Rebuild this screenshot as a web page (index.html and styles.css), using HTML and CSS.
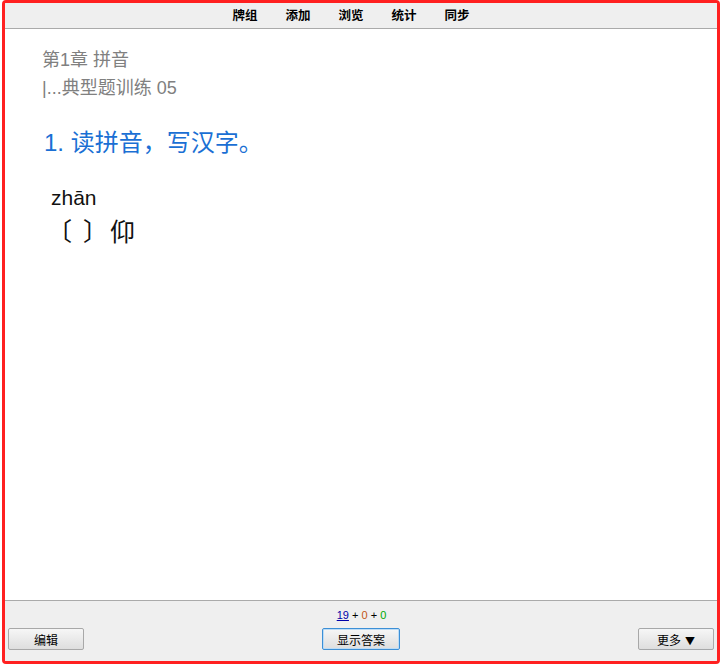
FILE: index.html
```html
<!DOCTYPE html>
<html lang="zh">
<head>
<meta charset="UTF-8" />
<title>Anki</title>
<link rel="stylesheet" href="styles.css">
</head>
<body>
<div class="frame">
  <div class="toolbar">
    <a class="tab">牌组</a>
    <a class="tab">添加</a>
    <a class="tab">浏览</a>
    <a class="tab">统计</a>
    <a class="tab">同步</a>
  </div>

  <div class="card">
    <div class="deck">第1章 拼音</div>
    <div class="deck">|...典型题训练 05</div>
    <div class="question">1. 读拼音，写汉字。</div>
    <div class="pinyin">zhān</div>
    <div class="blank">〔&nbsp;〕仰</div>
  </div>

  <div class="bottom">
    <div class="counts">
      <span class="new-count">19</span> + <span class="learn-count">0</span> + <span class="review-count">0</span>
    </div>
    <div class="buttons">
      <button class="btn">编辑</button>
      <button class="btn primary">显示答案</button>
      <button class="btn">更多<span class="arrow">▼</span></button>
    </div>
  </div>
</div>
</body>
</html>
```

FILE: styles.css
```css
* {
  box-sizing: border-box;
  margin: 0;
  padding: 0;
}

body {
  background: #fff;
  font-family: "Noto Sans CJK SC", sans-serif;
}

.frame {
  margin-left: 2px;
  width: 718px;
  height: 664px;
  border: 3px solid #ff2020;
  border-radius: 4px;
  display: flex;
  flex-direction: column;
  overflow: hidden;
}

/* top toolbar */
.toolbar {
  height: 26px;
  background: #efefef;
  border-bottom: 1px solid #aaa;
  display: flex;
  justify-content: center;
  align-items: center;
  gap: 28px;
  padding-right: 20px;
}

.tab {
  font-size: 12.5px;
  font-weight: bold;
  color: #000;
  line-height: 1;
}

/* card area */
.card {
  flex: 1;
  background: #fff;
  padding: 17px 0 0 37px;
  font-family: "Liberation Sans", "Noto Sans CJK SC", sans-serif;
}

.deck {
  font-size: 18px;
  line-height: 28px;
  color: #808080;
}

.question {
  margin-top: 24px;
  font-size: 24px;
  line-height: 34px;
  color: #1a6fd4;
  padding-left: 2px;
}

.pinyin {
  margin-top: 24px;
  padding-left: 9px;
  font-size: 21px;
  line-height: 28px;
  color: #111;
}

.blank {
  margin-top: 2px;
  padding-left: 5px;
  font-size: 25px;
  line-height: 36px;
  letter-spacing: 2px;
  color: #111;
}

/* bottom bar */
.bottom {
  height: 61px;
  background: #efefef;
  border-top: 1px solid #aaa;
  padding: 6px 3px 0 3px;
}

.counts {
  text-align: center;
  font-family: "Liberation Sans", sans-serif;
  font-size: 11px;
  line-height: 16px;
  color: #000;
  padding-left: 1px;
}

.new-count {
  color: #00a;
  text-decoration: underline;
}

.learn-count {
  color: #c35617;
}

.review-count {
  color: #0a0;
}

.buttons {
  margin-top: 5px;
  display: flex;
  justify-content: space-between;
  align-items: center;
}

.btn {
  width: 76px;
  height: 22px;
  font-family: "Noto Sans CJK SC", sans-serif;
  font-size: 12px;
  color: #000;
  background: linear-gradient(#f6f6f6, #dedede);
  border: 1px solid #a8a8a8;
  border-radius: 2px;
}

.btn.primary {
  width: 78px;
  border-color: #3c8fd6;
  box-shadow: inset 0 0 0 1px #bcdcf6;
}

.arrow {
  font-size: 10px;
  margin-left: 4px;
}
```
